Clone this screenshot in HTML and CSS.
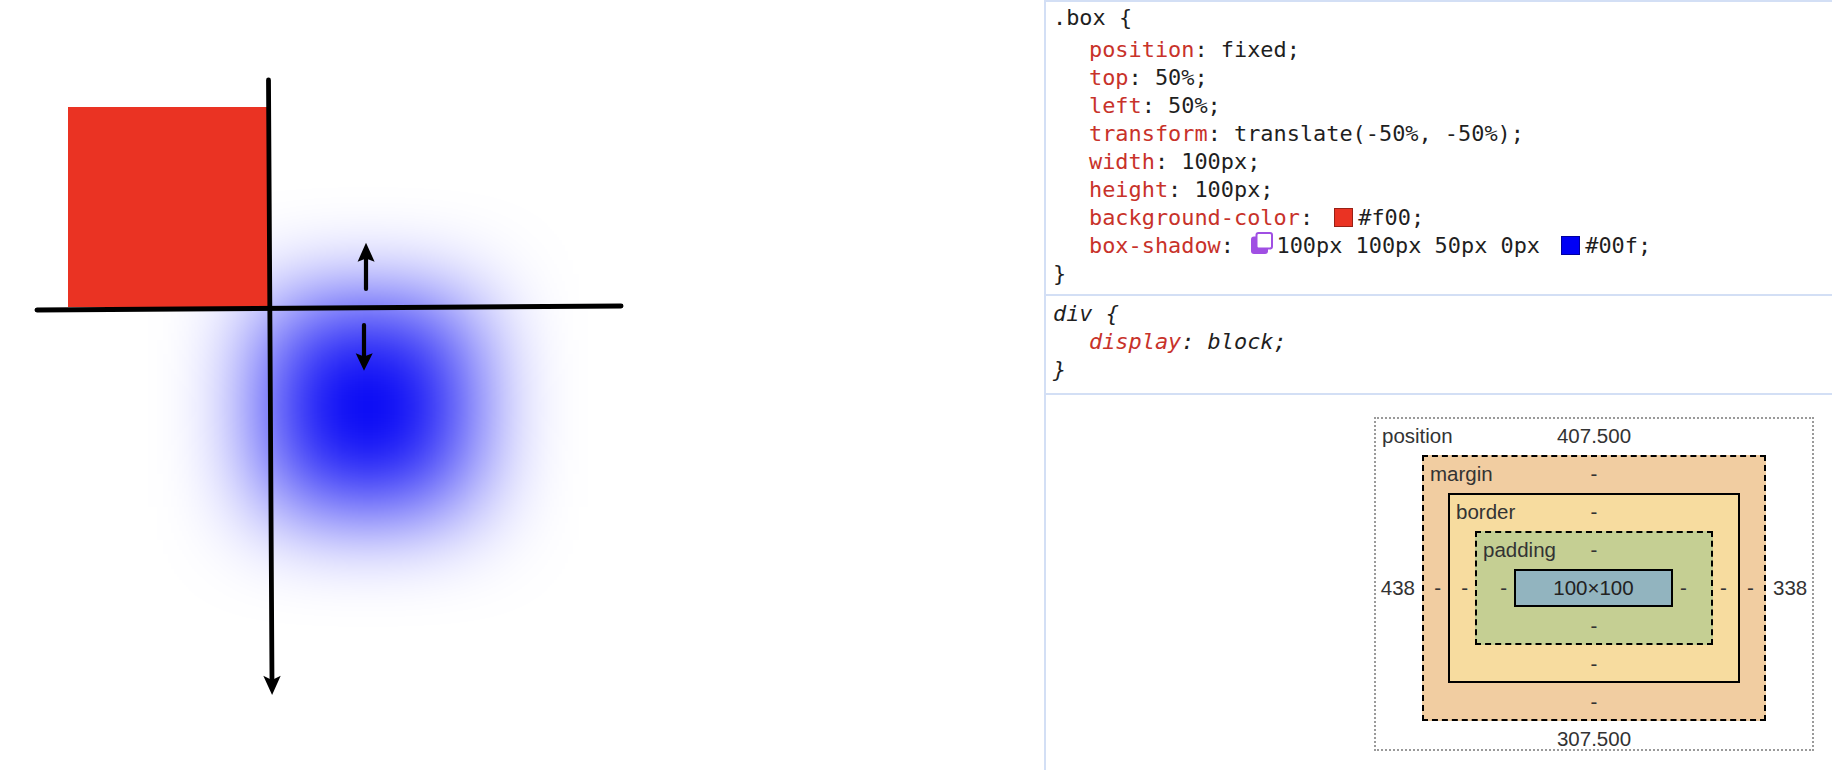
FILE: index.html
```html
<!DOCTYPE html>
<html lang="en">
<head>
<meta charset="utf-8">
<title>Box shadow</title>
<link rel="stylesheet" href="styles.css">
</head>
<body>
<div class="page">
  <div class="stage">
    <div class="demo-box"></div>
    <svg class="axes" width="1044" height="770" viewBox="0 0 1044 770">
      <g stroke="#000" stroke-linecap="round" fill="none">
        <line x1="37" y1="310" x2="621" y2="306" stroke-width="5"/>
        <line x1="268.5" y1="80" x2="272" y2="682" stroke-width="4.8"/>
        <line x1="366" y1="289" x2="366" y2="258" stroke-width="4.2"/>
        <line x1="364" y1="325" x2="364" y2="356" stroke-width="4.2"/>
      </g>
      <g fill="#000">
        <polygon points="263.3,675.7 272,680 280.7,675.7 272.1,695"/>
        <polygon points="357.6,261.7 366,258.5 374.6,261.7 366,242.7"/>
        <polygon points="355.7,353.3 364,356.5 372.7,353.3 364,370.7"/>
      </g>
    </svg>
  </div>
  <div class="panel">
    <div class="rule rule-first">
      <div class="line">.box {</div>
      <div class="props props-first">
        <div class="prop"><span class="pname">position</span>: fixed;</div>
        <div class="prop"><span class="pname">top</span>: 50%;</div>
        <div class="prop"><span class="pname">left</span>: 50%;</div>
        <div class="prop"><span class="pname">transform</span>: translate(-50%, -50%);</div>
        <div class="prop"><span class="pname">width</span>: 100px;</div>
        <div class="prop"><span class="pname">height</span>: 100px;</div>
        <div class="prop"><span class="pname">background-color</span>: <span class="swatch swatch-red"></span>#f00;</div>
        <div class="prop"><span class="pname">box-shadow</span>: <svg class="shadow-icon" width="22" height="22" viewBox="0 0 22 22"><rect x="0" y="4.5" width="17" height="17.5" rx="3" fill="#a04fe3"/><rect x="5.5" y="1" width="15.5" height="15.5" rx="2" fill="#fff" stroke="#a04fe3" stroke-width="2"/></svg>100px 100px 50px 0px <span class="swatch swatch-blue"></span>#00f;</div>
      </div>
      <div class="line">}</div>
    </div>
    <div class="rule rule-ua">
      <div class="line">div {</div>
      <div class="props">
        <div class="prop"><span class="pname">display</span>: block;</div>
      </div>
      <div class="line">}</div>
    </div>
    <div class="metrics">
      <div class="bm bm-position">
        <div class="bm-top"><span class="bm-label">position</span><span class="bm-val">407.500</span></div>
        <div class="bm-mid">
          <span class="bm-side bm-left">438</span>
          <div class="bm bm-margin">
            <div class="bm-top"><span class="bm-label">margin</span><span class="bm-val">-</span></div>
            <div class="bm-mid">
              <span class="bm-side bm-left">-</span>
              <div class="bm bm-border">
                <div class="bm-top"><span class="bm-label">border</span><span class="bm-val">-</span></div>
                <div class="bm-mid">
                  <span class="bm-side bm-left">-</span>
                  <div class="bm bm-padding">
                    <div class="bm-top"><span class="bm-label">padding</span><span class="bm-val">-</span></div>
                    <div class="bm-mid">
                      <span class="bm-side bm-left">-</span>
                      <div class="bm-content">100×100</div>
                      <span class="bm-side bm-right">-</span>
                    </div>
                    <div class="bm-bottom">-</div>
                  </div>
                  <span class="bm-side bm-right">-</span>
                </div>
                <div class="bm-bottom">-</div>
              </div>
              <span class="bm-side bm-right">-</span>
            </div>
            <div class="bm-bottom">-</div>
          </div>
          <span class="bm-side bm-right">338</span>
        </div>
        <div class="bm-bottom bm-bottom-pos">307.500</div>
      </div>
    </div>
  </div>
</div>
</body>
</html>
```

FILE: styles.css
```css
* {
  box-sizing: border-box;
}

html,
body {
  margin: 0;
  padding: 0;
  background: #ffffff;
}

body {
  width: 1832px;
  height: 770px;
  overflow: hidden;
}

.page {
  display: flex;
  height: 770px;
}

/* ---------- demo canvas ---------- */
.stage {
  position: relative;
  flex: none;
  width: 1044px;
  height: 100%;
  overflow: hidden;
}

.demo-box {
  position: absolute;
  left: 68px;
  top: 107px;
  width: 200px;
  height: 200px;
  background: #ea3323;
  box-shadow: 200px 200px 100px 0 #0000f5;
}

.axes {
  position: absolute;
  left: 0;
  top: 0;
}

/* ---------- styles pane ---------- */
.panel {
  flex: 1;
  display: flex;
  flex-direction: column;
  border-left: 2px solid #d3dff5;
  font-family: "DejaVu Sans Mono", "Liberation Mono", monospace;
  font-size: 21.9px;
  line-height: 28px;
  color: #1f1f1f;
}

.rule {
  padding-left: 7px;
  border-bottom: 2px solid #d3dff5;
}

.rule-first {
  border-top: 2px solid #d3dff5;
  padding-top: 2px;
  padding-bottom: 6px;
}

.rule-ua {
  padding-top: 4px;
  padding-bottom: 9px;
  font-style: italic;
}

.line {
  height: 28px;
  white-space: pre;
}

.props-first {
  padding-top: 4px;
}

.prop {
  height: 28px;
  padding-left: 36px;
  white-space: pre;
}

.pname {
  color: #c8322a;
}

.swatch {
  display: inline-block;
  width: 19px;
  height: 19px;
  margin: 0 5px 0 8px;
  vertical-align: -2px;
  border: 1px solid rgba(0, 0, 0, 0.35);
}

.swatch-red {
  background: #ea3323;
}

.swatch-blue {
  background: #0000f5;
  vertical-align: -1.5px;
  margin-left: 8px;
}

.shadow-icon {
  display: inline-block;
  width: 22px;
  height: 22px;
  margin: 0 3.5px 0 3.8px;
  vertical-align: -1px;
}

/* ---------- box model ---------- */
.metrics {
  flex: 1;
  display: flex;
  justify-content: flex-end;
  align-items: flex-start;
  padding: 22px 18px 0 0;
  font-family: "Liberation Sans", Arial, sans-serif;
  font-size: 20.5px;
  line-height: 20px;
  color: #333333;
}

.bm {
  display: flex;
  flex-direction: column;
  flex: none;
}

.bm-position {
  border: 2px dotted #9a9a9a;
  background: #ffffff;
}

.bm-margin {
  border: 2px dashed #000000;
  background: #f1cda1;
}

.bm-border {
  border: 2px solid #000000;
  background: #f7dc9f;
}

.bm-padding {
  border: 2px dashed #000000;
  background: #c5cf93;
}

.bm-top {
  display: grid;
  grid-template-columns: minmax(0, 1fr) auto minmax(0, 1fr);
  height: 36px;
  padding-top: 7.2px;
}

.bm-label {
  justify-self: start;
  padding-left: 6px;
  white-space: nowrap;
}

.bm-val {
  text-align: center;
}

.bm-mid {
  display: flex;
  align-items: center;
}

.bm-side {
  flex: none;
}

.bm-left {
  text-align: right;
  padding-right: 7px;
}

.bm-right {
  text-align: left;
  padding-left: 7px;
}

.bm-position > .bm-mid > .bm-side {
  width: 46px;
}

.bm-margin > .bm-mid > .bm-side {
  width: 24px;
}

.bm-border > .bm-mid > .bm-side {
  width: 25px;
}

.bm-padding > .bm-mid > .bm-left {
  width: 37px;
}

.bm-padding > .bm-mid > .bm-right {
  width: 38px;
}

.bm-bottom {
  height: 36px;
  padding-top: 9.3px;
  text-align: center;
}

.bm-bottom-pos {
  height: 28px;
  padding-top: 8.3px;
}

.bm-content {
  flex: none;
  width: 159px;
  height: 38px;
  border: 2px solid #000000;
  background: #92b4bf;
  line-height: 34px;
  text-align: center;
  color: #222222;
}
```
